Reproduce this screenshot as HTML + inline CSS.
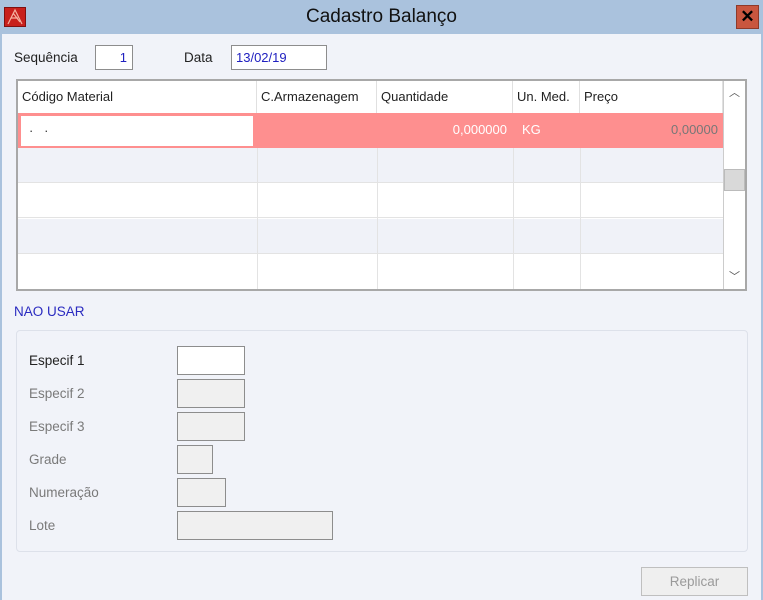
<!DOCTYPE html>
<html><head><meta charset="utf-8"><style>
*{margin:0;padding:0;box-sizing:border-box}
body{width:763px;height:600px;overflow:hidden;background:#f1f3f9;font-family:"Liberation Sans",sans-serif;font-size:13px;color:#222;position:relative}
.a{position:absolute}
.title{left:0;top:0;width:763px;height:34px;background:#aac2dd}
.inp{position:absolute;border:1px solid #8d8d8d;background:#f0f0f0}
.hd{position:absolute;top:0;height:32px;line-height:32px;padding-left:4px;border-right:1px solid #e0e0e0;background:#fff}
.vl{position:absolute;top:32px;width:1px;height:176px;background:#e3e3e3}
.row{position:absolute;left:0;width:705px;height:35px;border-bottom:1px solid #e3e3e3}
.lbl{position:absolute;left:29px;font-size:13.5px;color:#7a7a7a}
</style></head><body>
<div class="a title"></div>
<div class="a" style="left:0;top:34px;width:2px;height:566px;background:#aac2dd"></div>
<div class="a" style="left:761px;top:34px;width:2px;height:566px;background:#aac2dd"></div>
<div class="a" style="left:4px;top:7px;width:22px;height:20px;background:#c8201c;border:1px solid #801010"></div>
<svg class="a" style="left:4px;top:7px" width="22" height="20"><path d="M4 17 L11 3 L18 17 M7 11 L14 11 M9 6 L16 15" stroke="#f5b0a0" stroke-width="1.2" fill="none"/></svg>
<div class="a" style="left:0;top:6px;width:763px;text-align:center;font-size:19px;color:#111">Cadastro Balanço</div>
<div class="a" style="left:736px;top:5px;width:23px;height:24px;background:#c9563f;border:1px solid #8e3a2a;color:#000;font-weight:bold;text-align:center;line-height:22px;font-size:17px">✕</div>

<div class="a" style="left:14px;top:50px;font-size:13.5px">Sequência</div>
<div class="inp" style="left:95px;top:45px;width:38px;height:25px;background:#fff;color:#2020c0;text-align:right;padding-right:5px;line-height:23px">1</div>
<div class="a" style="left:184px;top:50px;font-size:13.5px">Data</div>
<div class="inp" style="left:231px;top:45px;width:96px;height:25px;background:#fff;color:#2020c0;padding-left:4px;line-height:23px">13/02/19</div>

<div class="a" style="left:16px;top:79px;width:731px;height:212px;border:2px solid #a8a8a8;background:#fff">
 <div class="hd" style="left:0;width:239px">Código Material</div>
 <div class="hd" style="left:239px;width:120px">C.Armazenagem</div>
 <div class="hd" style="left:359px;width:136px">Quantidade</div>
 <div class="hd" style="left:495px;width:67px">Un. Med.</div>
 <div class="hd" style="left:562px;width:143px">Preço</div>
 <div class="row" style="top:32px;background:#fe8f8f;border:none">
  <div class="a" style="left:3px;top:3px;width:232px;height:30px;background:#fff;padding-left:8px;line-height:30px;color:#333">·&nbsp;&nbsp;&nbsp;·</div>
  <div class="a" style="left:359px;top:0;width:130px;text-align:right;line-height:34px;color:#fff">0,000000</div>
  <div class="a" style="left:504px;top:0;line-height:34px;color:#fff">KG</div>
  <div class="a" style="left:562px;top:0;width:138px;text-align:right;line-height:34px;color:#777">0,00000</div>
 </div>
 <div class="row" style="top:67px;background:#f0f2f8"></div>
 <div class="row" style="top:102px;background:#fff"></div>
 <div class="row" style="top:138px;background:#f0f2f8"></div>
 <div class="row" style="top:173px;background:#fff;border:none"></div>
 <div class="vl" style="left:239px;top:67px;height:141px"></div>
 <div class="vl" style="left:359px;top:67px;height:141px"></div>
 <div class="vl" style="left:495px;top:67px;height:141px"></div>
 <div class="vl" style="left:562px;top:67px;height:141px"></div>
 <div class="a" style="left:705px;top:0;width:22px;height:208px;border-left:1px solid #ccc;background:#fff">
  <div class="a" style="left:0;top:0;width:21px;height:22px;text-align:center;line-height:24px;color:#555;font-size:11px">︿</div>
  <div class="a" style="left:0;top:88px;width:21px;height:22px;background:#d9d9d9;border:1px solid #bbb"></div>
  <div class="a" style="left:0;top:185px;width:21px;height:22px;text-align:center;line-height:22px;color:#555;font-size:11px">﹀</div>
 </div>
</div>

<div class="a" style="left:14px;top:304px;color:#2a2ac0;font-size:13.5px">NAO USAR</div>
<div class="a" style="left:16px;top:330px;width:732px;height:222px;border:1px solid #dde1ea;border-radius:4px"></div>
<div class="lbl" style="top:353px;color:#222">Especif 1</div>
<div class="lbl" style="top:386px">Especif 2</div>
<div class="lbl" style="top:419px">Especif 3</div>
<div class="lbl" style="top:452px">Grade</div>
<div class="lbl" style="top:485px">Numeração</div>
<div class="lbl" style="top:518px">Lote</div>
<div class="inp" style="left:177px;top:346px;width:68px;height:29px;background:#fff"></div>
<div class="inp" style="left:177px;top:379px;width:68px;height:29px"></div>
<div class="inp" style="left:177px;top:412px;width:68px;height:29px"></div>
<div class="inp" style="left:177px;top:445px;width:36px;height:29px"></div>
<div class="inp" style="left:177px;top:478px;width:49px;height:29px"></div>
<div class="inp" style="left:177px;top:511px;width:156px;height:29px"></div>

<div class="a" style="left:641px;top:567px;width:107px;height:29px;border:1px solid #bfbfbf;background:#efefef;color:#9a9a9a;text-align:center;line-height:27px;font-size:13.5px">Replicar</div>
</body></html>
